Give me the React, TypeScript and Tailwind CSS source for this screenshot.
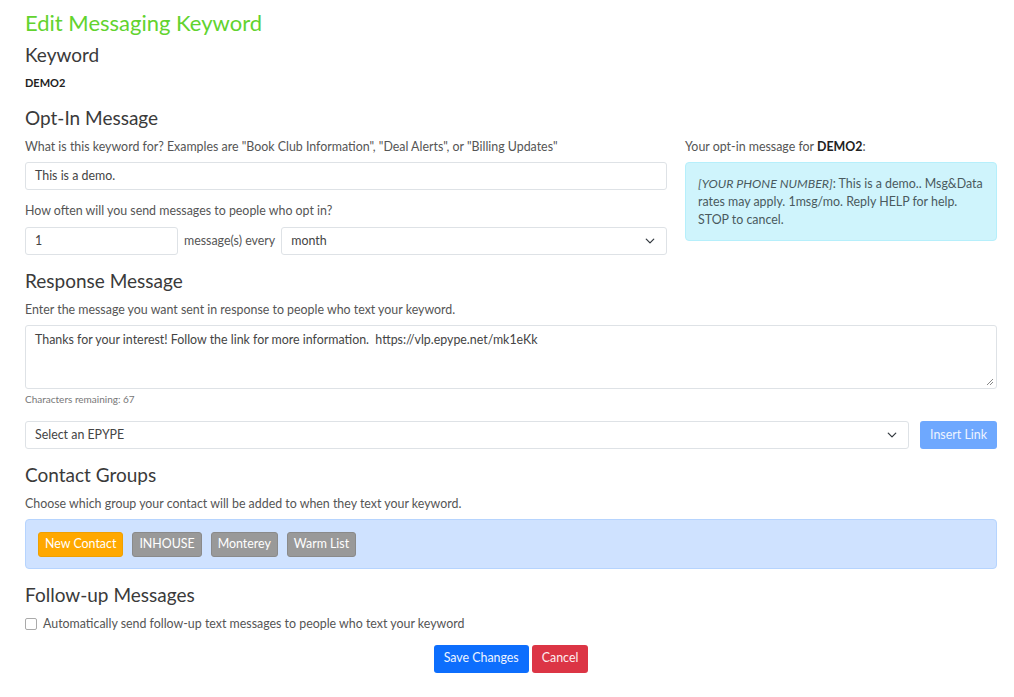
import React from 'react';

const groups = [
  { name: 'New Contact', active: true },
  { name: 'INHOUSE', active: false },
  { name: 'Monterey', active: false },
  { name: 'Warm List', active: false },
];

const Chevron = () => (
  <svg width="10" height="10" viewBox="0 0 16 16" fill="none" stroke="#343a40" strokeWidth="2" strokeLinecap="round" strokeLinejoin="round">
    <path d="M2 5l6 6 6-6" />
  </svg>
);

const SectionTitle: React.FC<{ children: React.ReactNode }> = ({ children }) => (
  <h2 className="text-[19px] leading-[24px] text-[#3a3a3a]">{children}</h2>
);

const Hint: React.FC<{ children: React.ReactNode }> = ({ children }) => (
  <p className="text-[12.4px] leading-[18px] text-[#555]">{children}</p>
);

const SelectBox: React.FC<{ value: string; className?: string }> = ({ value, className = '' }) => (
  <div className={`h-[28px] flex items-center justify-between border border-[#dee2e6] rounded-[3px] bg-white pl-[9px] pr-[11px] text-[12.4px] text-[#444] ${className}`}>
    <span>{value}</span>
    <Chevron />
  </div>
);

export default function App() {
  return (
    <div className="min-h-screen bg-white pl-[25px] pr-[17px] pt-[10px] font-['Lato','Open_Sans',sans-serif] text-[#444]">
      <h1 className="text-[22px] leading-[26px] text-[#62d32e]">Edit Messaging Keyword</h1>

      <div className="mt-[7px]">
        <SectionTitle>Keyword</SectionTitle>
        <div className="mt-[9px] text-[11px] font-bold leading-[14px] text-[#222]">DEMO2</div>
      </div>

      <div className="mt-[16px] grid grid-cols-[642px_312px] gap-x-[18px]">
        <div>
          <SectionTitle>Opt-In Message</SectionTitle>
          <div className="mt-[8px]">
            <Hint>What is this keyword for? Examples are "Book Club Information", "Deal Alerts", or "Billing Updates"</Hint>
          </div>
          <div className="mt-[6px] h-[28px] flex items-center border border-[#dee2e6] rounded-[3px] px-[9px] text-[12.4px]">
            This is a demo.
          </div>
          <div className="mt-[12px]">
            <Hint>How often will you send messages to people who opt in?</Hint>
          </div>
          <div className="mt-[7px] flex items-center">
            <div className="w-[153px] h-[28px] flex items-center border border-[#dee2e6] rounded-[3px] px-[9px] text-[12.4px]">1</div>
            <span className="mx-[6px] text-[12.4px] text-[#555]">message(s) every</span>
            <SelectBox value="month" className="flex-1" />
          </div>
        </div>

        <div className="pt-[32px]">
          <p className="text-[12.4px] leading-[18px] text-[#555]">
            Your opt-in message for <span className="font-bold text-[#222]">DEMO2</span>:
          </p>
          <div className="mt-[6px] h-[79px] rounded-[4px] border border-[#b6effb] bg-[#cff4fc] px-[12px] pt-[12px] text-[12.4px] leading-[18px] text-[#4a5a5e]">
            <span className="italic">[YOUR PHONE NUMBER]</span>: This is a demo.. Msg&amp;Data rates may apply. 1msg/mo. Reply HELP for help. STOP to cancel.
          </div>
        </div>
      </div>

      <div className="mt-[14px]">
        <SectionTitle>Response Message</SectionTitle>
        <div className="mt-[8px]">
          <Hint>Enter the message you want sent in response to people who text your keyword.</Hint>
        </div>
        <div className="relative mt-[6px] h-[64px] border border-[#dee2e6] rounded-[3px] px-[9px] pt-[5px] text-[12.4px]">
          Thanks for your interest! Follow the link for more information.&nbsp; https://vlp.epype.net/mk1eKk
          <svg className="absolute right-[2px] bottom-[2px]" width="8" height="8" viewBox="0 0 8 8" stroke="#888" strokeWidth="1">
            <path d="M7 1L1 7M7 4L4 7" />
          </svg>
        </div>
        <div className="mt-[3px] text-[10px] leading-[14px] text-[#777]">Characters remaining: 67</div>
        <div className="mt-[15px] flex items-center gap-[11px]">
          <SelectBox value="Select an EPYPE" className="flex-1" />
          <button className="h-[28px] w-[77px] rounded-[3px] bg-[#6ea8fe] text-[12.4px] text-[#eef4ff]">Insert Link</button>
        </div>
      </div>

      <div className="mt-[14px]">
        <SectionTitle>Contact Groups</SectionTitle>
        <div className="mt-[8px]">
          <Hint>Choose which group your contact will be added to when they text your keyword.</Hint>
        </div>
        <div className="mt-[6px] h-[50px] flex items-center gap-[9px] rounded-[4px] border border-[#b6d4fe] bg-[#cfe2ff] px-[12px]">
          {groups.map((g) => (
            <button
              key={g.name}
              className={`h-[25px] px-[6px] rounded-[3px] border text-[12.4px] text-white ${
                g.active ? 'bg-[#ffa800] border-[#f0a000]' : 'bg-[#999] border-[#8a8a8a]'
              }`}
            >
              {g.name}
            </button>
          ))}
        </div>
      </div>

      <div className="mt-[14px]">
        <SectionTitle>Follow-up Messages</SectionTitle>
        <label className="mt-[8px] flex items-center gap-[6px] text-[12.4px] text-[#555]">
          <span className="w-[12px] h-[12px] rounded-[2px] border border-[#aaa] bg-white" />
          Automatically send follow-up text messages to people who text your keyword
        </label>
      </div>

      <div className="mt-[11px] flex justify-center gap-[3px]">
        <button className="h-[28px] px-[10px] rounded-[3px] bg-[#0d6efd] text-[12.4px] text-[#eef4ff]">Save Changes</button>
        <button className="h-[28px] px-[10px] rounded-[3px] bg-[#dc3545] text-[12.4px] text-[#fdeef0]">Cancel</button>
      </div>
    </div>
  );
}
